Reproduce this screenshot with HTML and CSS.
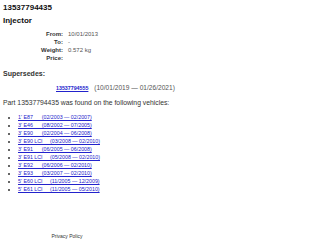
FILE: index.html
```html
<!DOCTYPE html>
<html>
  <head>
    <title>13537794435 Injector</title>
    <link rel="stylesheet" href="styles.css">
  </head>
  <body>
    <h1>13537794435</h1>
    <h2>Injector</h2>
    <table class="details">
      <tr><th>From:</th><td>10/01/2013</td></tr>
      <tr><th>To:</th><td>-</td></tr>
      <tr><th>Weight:</th><td>0.572 kg</td></tr>
      <tr><th>Price:</th><td></td></tr>
    </table>
    <h3>Supersedes:</h3>
    <p class="supersedes">
      <a href="#">13537794555</a>
      <span class="range">(10/01/2019 &mdash; 01/26/2021)</span>
    </p>
    <p class="found">Part 13537794435 was found on the following vehicles:</p>
    <ul class="vehicles">
      <li><a href="#">1' E87&nbsp;&nbsp;&nbsp;&nbsp;&nbsp;&nbsp;(02/2003 &mdash; 02/2007)</a></li>
      <li><a href="#">3' E46&nbsp;&nbsp;&nbsp;&nbsp;&nbsp;&nbsp;(08/2002 &mdash; 07/2005)</a></li>
      <li><a href="#">3' E90&nbsp;&nbsp;&nbsp;&nbsp;&nbsp;&nbsp;(02/2004 &mdash; 06/2008)</a></li>
      <li><a href="#">3' E90 LCI&nbsp;&nbsp;&nbsp;&nbsp;&nbsp;(03/2008 &mdash; 02/2010)</a></li>
      <li><a href="#">3' E91&nbsp;&nbsp;&nbsp;&nbsp;&nbsp;&nbsp;(06/2005 &mdash; 06/2008)</a></li>
      <li><a href="#">3' E91 LCI&nbsp;&nbsp;&nbsp;&nbsp;&nbsp;(05/2008 &mdash; 02/2010)</a></li>
      <li><a href="#">3' E92&nbsp;&nbsp;&nbsp;&nbsp;&nbsp;&nbsp;(06/2006 &mdash; 02/2010)</a></li>
      <li><a href="#">3' E93&nbsp;&nbsp;&nbsp;&nbsp;&nbsp;&nbsp;(03/2007 &mdash; 02/2010)</a></li>
      <li><a href="#">5' E60 LCI&nbsp;&nbsp;&nbsp;&nbsp;&nbsp;(11/2005 &mdash; 12/2009)</a></li>
      <li><a href="#">5' E61 LCI&nbsp;&nbsp;&nbsp;&nbsp;&nbsp;(11/2005 &mdash; 05/2010)</a></li>
    </ul>
    <div class="footer">Privacy Policy</div>
  </body>
</html>
```

FILE: styles.css
```css
body {
  margin: 0;
  padding: 3px 3px 0;
  background-color: #FFFFFF;
  color: #333333;
  font-family: "Liberation Sans", Arial, sans-serif;
  font-size: 6.5px;
  line-height: 8px;
}
h1, h2 {
  margin: 0;
  color: #111111;
  font-size: 8px;
  line-height: 10px;
}
h2 {
  margin-top: 3px;
}
.details {
  margin: 4px 0 0 26px;
  border-collapse: collapse;
  font-size: 6px;
  line-height: 8px;
}
.details th {
  width: 34px;
  padding: 0;
  text-align: right;
  font-weight: bold;
}
.details td {
  padding: 0 0 0 5px;
  height: 8px;
  color: #555555;
}
h3 {
  margin: 8px 0 0;
  font-size: 7px;
  line-height: 8px;
}
.supersedes {
  margin: 6px 0 0;
  padding-left: 53px;
  white-space: nowrap;
}
.supersedes a {
  color: #2222CC;
  font-size: 5.3px;
  font-weight: bold;
}
.supersedes .range {
  margin-left: 4px;
  color: #555555;
  font-size: 6.6px;
}
.found {
  margin: 7px 0 0;
  white-space: nowrap;
  font-size: 6.8px;
}
.vehicles {
  margin: 6px 0 0;
  padding-left: 15px;
  font-size: 5.3px;
  white-space: nowrap;
}
.vehicles a {
  color: #2222CC;
}
.footer {
  width: 128px;
  margin-top: 39px;
  text-align: center;
  font-size: 5px;
  color: #333333;
}
```
